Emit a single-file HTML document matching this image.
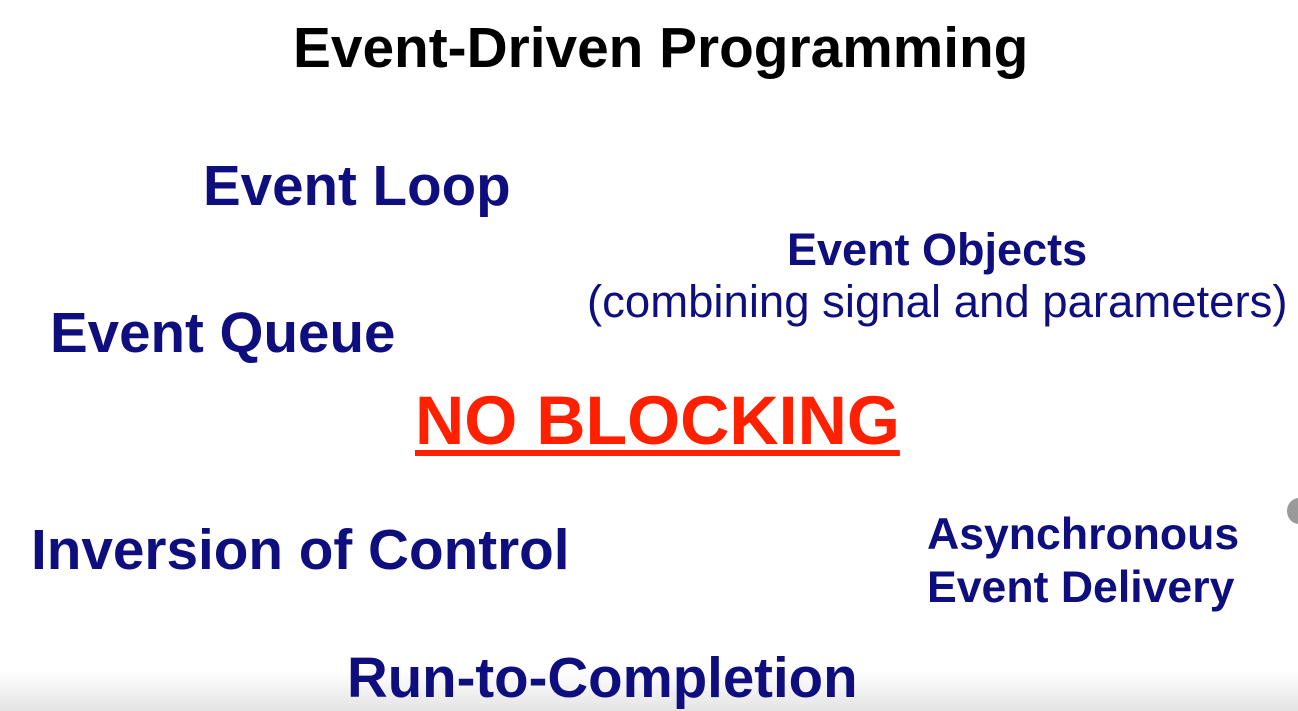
<!DOCTYPE html>
<html><head><meta charset="utf-8"><style>
html,body{margin:0;padding:0;}
body{width:1298px;height:711px;position:relative;overflow:hidden;background:#fff;font-family:"Liberation Sans",Arial,sans-serif;}
.t{position:absolute;white-space:nowrap;font-weight:bold;color:#0e0e7e;}
.fade{position:absolute;left:0;right:0;bottom:0;height:40px;background:linear-gradient(#fff,#e4e4e4);}
</style></head><body>
<div class="fade"></div>
<div class="t" style="left:293px;top:20px;font-size:56.8px;line-height:57px;color:#000;">Event-Driven Programming</div>
<div class="t" style="left:203px;top:158px;font-size:56.5px;line-height:56px;">Event Loop</div>
<div class="t" style="left:787px;top:228px;font-size:45px;line-height:44px;">Event Objects</div>
<div class="t" style="left:587px;top:280px;font-size:45.5px;line-height:44px;font-weight:normal;">(combining signal and parameters)</div>
<div class="t" style="left:50px;top:305px;font-size:56.5px;line-height:56px;">Event Queue</div>
<div class="t" style="left:415px;top:388px;font-size:68.2px;line-height:67px;color:#ff2000;text-decoration:underline;text-decoration-thickness:6px;text-underline-offset:6px;">NO BLOCKING</div>
<div class="t" style="left:31px;top:523px;font-size:56.7px;line-height:56px;">Inversion of Control</div>
<div class="t" style="left:927px;top:513px;font-size:44.6px;line-height:44px;">Asynchronous</div>
<div class="t" style="left:927px;top:566px;font-size:44.6px;line-height:44px;">Event Delivery</div>
<div class="t" style="left:347px;top:650px;font-size:56.4px;line-height:56px;">Run-to-Completion</div>
<div style="position:absolute;left:1287px;top:498px;width:24px;height:26px;border-radius:50%;background:#9a9a9a;"></div>
</body></html>
